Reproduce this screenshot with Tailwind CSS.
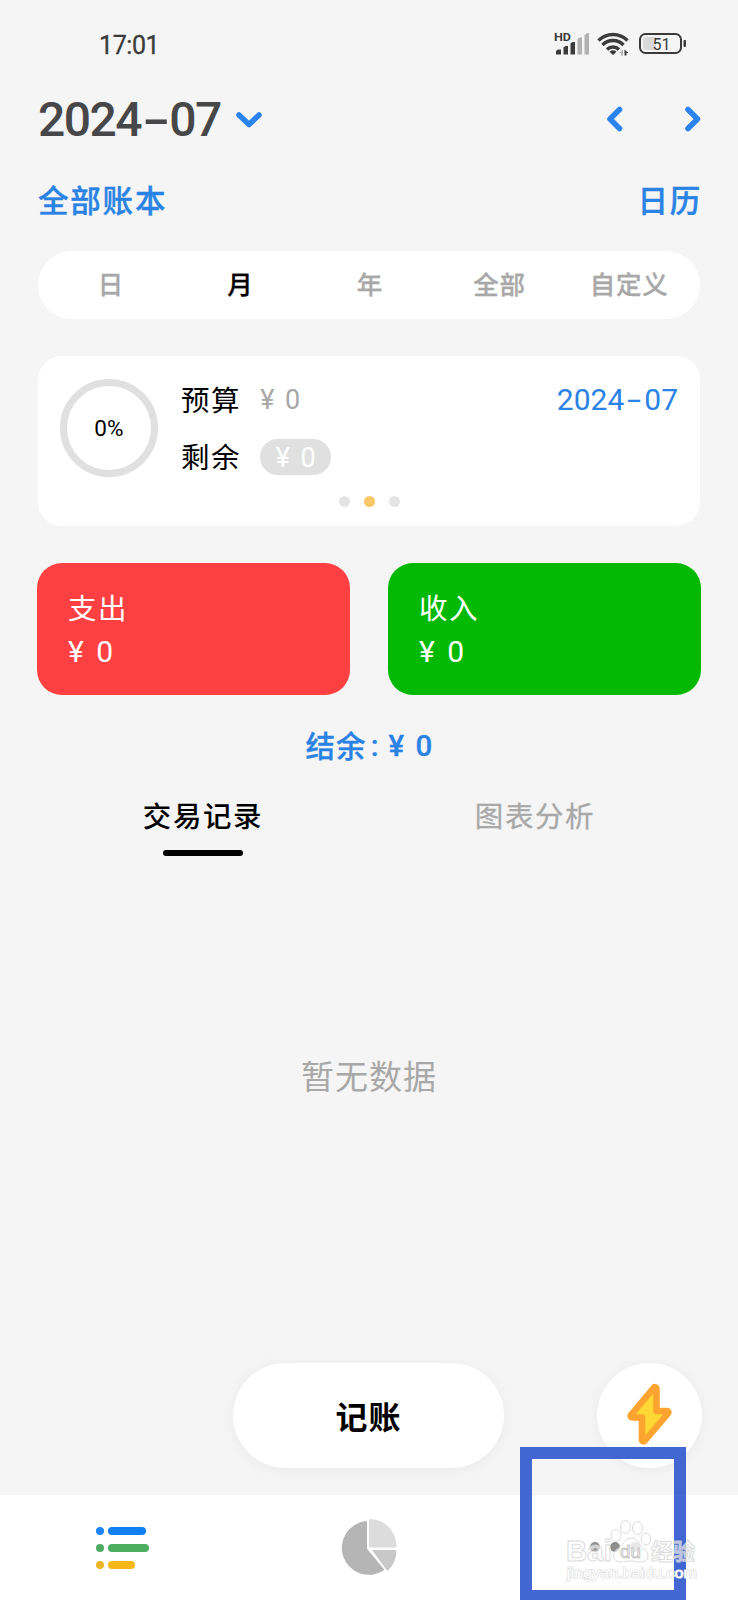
<!DOCTYPE html>
<html lang="zh-CN">
<head>
    <meta charset="UTF-8">
    <meta name="viewport" content="width=device-width, initial-scale=1.0">
    <title>记账</title>

    <script src="https://cdn.jsdelivr.net/npm/@tailwindcss/browser@4"></script>

    <style>
        body { font-family: Roboto, 'Noto Sans CJK SC', sans-serif; }
    </style>
</head>
<body class="bg-[#f5f5f5]">

    <div class="relative flex flex-col w-[738px] h-[1600px] overflow-hidden leading-none text-black">

        <!-- Status bar -->
        <div class="flex items-center justify-between h-[88px] pl-[99px] pr-[52px] text-[#3b3b3b]">
            <span class="pt-[2px] text-[25px] tracking-[-0.4px] [-webkit-text-stroke:0.3px]">17:01</span>
            <svg class="w-[132px] h-[26px]" viewBox="0 0 132 26">
                <text x="0" y="10" font-size="11" font-weight="700" fill="#3b3b3b" textLength="17" lengthAdjust="spacingAndGlyphs">HD</text>
                <g fill="#3b3b3b">
                    <path d="M2 23.500v-3.500l2-1.500h3v5zM9.500 23.500v-7l2-1.500h2.500v8.500zM16.500 23.500v-11l2-1.500h2.500v12.500z"/>
                    <path fill="#b1b1b1" d="M23.500 23.500V8l2-1.500H28v17zM30.500 23.500V4l3-2H35v21.500z"/>
                </g>
                <g fill="none" stroke="#3b3b3b" stroke-width="3.400">
                    <path d="M44.500 9.500a20.500 20.500 0 0 1 29 0M48.500 14a14.500 14.500 0 0 1 21 0M53 18.500a8.500 8.500 0 0 1 12 0"/>
                </g>
                <path fill="#3b3b3b" d="M59 24l-3.500-3.300a5 5 0 0 1 7 0zM70.500 18.500l4 3.500h-2v2.500h-2z"/>
                <path fill="#b1b1b1" d="M69 24.500v-6L65 22h2v2.500z"/>
                <rect x="86" y="3" width="41" height="19" rx="5.500" fill="none" stroke="#3b3b3b" stroke-width="2"/>
                <path fill="#d9d9d9" d="M92 6h10v13H92a3 3 0 0 1-3-3V9a3 3 0 0 1 3-3z"/>
                <rect x="129.500" y="9" width="2.500" height="7" rx="1" fill="#3b3b3b"/>
                <text x="98.500" y="18.500" font-size="16" fill="#3b3b3b">51</text>
            </svg>
        </div>

        <!-- Month picker -->
        <div class="flex items-center h-[62px] pl-[38px] pr-[37px]">
            <h1 class="pt-[2px] text-[48px] font-medium text-[#47474a] tracking-[-1.5px]">2024<span class="inline-block w-[28px] text-center scale-x-170">-</span>07</h1>
            <svg class="w-[26px] h-4 ml-[15px] mt-px text-[#2a83ee]" viewBox="0 0 26 16" fill="none" stroke="currentColor" stroke-width="5.500" stroke-linecap="round" stroke-linejoin="round">
                <path d="M3 3l10 9.500L23 3"/>
            </svg>
            <div class="flex gap-[62px] ml-auto text-[#2a83ee]">
                <svg class="w-4 h-[26px]" viewBox="0 0 16 26" fill="none" stroke="currentColor" stroke-width="5.500" stroke-linecap="round" stroke-linejoin="round">
                    <path d="M12.500 3.500L3 13l9.500 9.500"/>
                </svg>
                <svg class="w-4 h-[26px]" viewBox="0 0 16 26" fill="none" stroke="currentColor" stroke-width="5.500" stroke-linecap="round" stroke-linejoin="round">
                    <path d="M3 3.500l9.500 9.500L3 22.500"/>
                </svg>
            </div>
        </div>

        <!-- Ledger / calendar links -->
        <div class="flex items-center justify-between h-[101px] pt-[3px] pl-[38px] pr-[36px] text-[30.5px] font-medium tracking-[1.8px] text-[#2a83e4] [-webkit-text-stroke:0.4px]">
            <a>全部账本</a>
            <a>日历</a>
        </div>

        <!-- Period tabs -->
        <div class="grid grid-cols-5 items-center h-[68px] mx-[38px] pt-[2px] pl-[8px] pr-[6px] rounded-full bg-white text-center text-[25.5px] font-medium tracking-[0.8px] text-[#a8a8a8] [-webkit-text-stroke:0.3px]">
            <span>日</span>
            <span class="text-black">月</span>
            <span>年</span>
            <span>全部</span>
            <span>自定义</span>
        </div>

        <!-- Budget card -->
        <div class="flex flex-col h-[170px] mt-[37px] mx-[38px] pt-[23px] px-[22px] rounded-[24px] bg-white">
            <div class="flex h-[100px]">
                <div class="flex items-center justify-center size-[98px] pt-px rounded-full border-[7px] border-[#e0e0e0] text-[22.5px] tracking-[0.3px]">0%</div>
                <div class="flex flex-col ml-[23px] text-[28.5px]">
                    <div class="flex items-center h-[43px]">
                        <span class="pt-[3px] tracking-[1.6px]">预算</span>
                        <span class="ml-[19px] text-[27px] [word-spacing:4px] text-[#a8a8a8]">¥ 0</span>
                    </div>
                    <div class="flex items-center h-[36px] mt-[17px]">
                        <span class="pt-[4px] tracking-[1.6px]">剩余</span>
                        <span class="flex items-center justify-center w-[71px] h-[36px] pt-[2px] ml-[19px] rounded-full bg-[#e0e0e0] text-[27px] [word-spacing:4px] text-white">¥ 0</span>
                    </div>
                </div>
                <span class="flex items-center h-[41px] ml-auto text-[30px] text-[#2a83e4]">2024<span class="inline-block w-[20px] text-center scale-x-170">-</span>07</span>
            </div>
            <div class="flex justify-center gap-[14px] mt-[17px]">
                <span class="size-[11px] rounded-full bg-[#e4e4e4]"></span>
                <span class="size-[11px] rounded-full bg-[#fbc767]"></span>
                <span class="size-[11px] rounded-full bg-[#e4e4e4]"></span>
            </div>
        </div>

        <!-- Expense / income -->
        <div class="grid grid-cols-2 gap-[38px] mt-[37px] mx-[37px] text-[28.5px] text-white">
            <div class="h-[132px] pl-[31px] pt-[33px] rounded-[25px] bg-[#ff4042]">
                <p class="tracking-[1.6px]">支出</p>
                <p class="mt-[12px] text-[30px] [word-spacing:5px]">¥ 0</p>
            </div>
            <div class="h-[132px] pl-[31px] pt-[33px] rounded-[25px] bg-[#03b903]">
                <p class="tracking-[1.6px]">收入</p>
                <p class="mt-[12px] text-[30px] [word-spacing:5px]">¥ 0</p>
            </div>
        </div>

        <p class="flex items-center justify-center h-[102px] pt-[2px] text-[29.5px] font-medium text-[#2a83e4] [-webkit-text-stroke:0.3px]"><span class="pt-px tracking-[1px]">结余</span><span class="w-[22px] pr-[6px] text-center">:</span><span class="[word-spacing:4px]">¥ 0</span></p>

        <!-- Content tabs -->
        <div class="grid grid-cols-2 mx-[37px] text-center text-[28.5px] tracking-[1.6px]">
            <div class="flex flex-col items-center pt-[7px]">
                <span class="font-medium">交易记录</span>
                <span class="w-[80px] h-[6px] mt-[17px] rounded-full bg-black"></span>
            </div>
            <div class="pt-[7px] text-[#a8a8a8] [-webkit-text-stroke:0.3px]">图表分析</div>
        </div>

        <p class="mt-[205px] text-center text-[33px] tracking-[1px] text-[#a8a8a8]">暂无数据</p>

        <!-- Floating actions -->
        <div class="flex items-center justify-between mt-auto mb-[27px] pl-[233px] pr-[36px]">
            <button class="w-[271px] h-[105px] pt-[4px] rounded-full bg-white text-[32px] font-bold tracking-[1px] shadow-[0_2px_14px_rgba(0,0,0,0.05)]">记账</button>
            <button class="flex items-center justify-center size-[105px] pb-1 rounded-full bg-white shadow-[0_2px_14px_rgba(0,0,0,0.05)]">
                <svg class="w-[46px] h-[62px]" viewBox="0 0 46 62">
                    <path d="M27 4.500L4 32a1.500 1.500 0 0 0 1 2.500h10V57a1.500 1.500 0 0 0 2.500 1L41 30.500a1.500 1.500 0 0 0-1-2.500H29.500V5.500a1.500 1.500 0 0 0-2.500-1z" fill="#fdd835" stroke="#fda32f" stroke-width="6.500" stroke-linejoin="round"/>
                </svg>
            </button>
        </div>

        <!-- Bottom navigation -->
        <nav class="grid grid-cols-3 h-[105px] bg-white">
            <div class="flex flex-col gap-[9px] pt-[32px] pl-[96px]">
                <div class="flex gap-1"><i class="size-2 rounded-full bg-[#1c83f0]"></i><i class="w-[38px] h-2 rounded-full bg-[#1180f5]"></i></div>
                <div class="flex gap-1"><i class="size-2 rounded-full bg-[#4fab64]"></i><i class="w-[41px] h-2 rounded-full bg-[#4cae61]"></i></div>
                <div class="flex gap-1"><i class="size-2 rounded-full bg-[#f0b429]"></i><i class="w-[27px] h-2 rounded-full bg-[#f7b816]"></i></div>
            </div>
            <div class="flex justify-center pt-[24px] pr-px">
                <svg class="w-14 h-[57px]" viewBox="0 0 56 57">
                    <path fill="#b5b5b5" d="M26 3q0-1-1-1A27 27 0 1 0 42.500 51.500q1-.8.3-1.600L27 31q-1-1-1-2.500z"/>
                    <path fill="#dcdcdc" d="M28 1.500Q28 0 29.500 0A27 27 0 0 1 55.500 27q0 1.500-1.500 1.500H28z"/>
                    <path fill="#c8c8c8" d="M31 31H54q1.500 0 1.300 1.500A27 27 0 0 1 47.500 51q-1 1-2 0z"/>
                </svg>
            </div>
            <div class="flex gap-[10px] pt-[47px] pl-[98px]">
                <i class="size-[10px] rounded-full bg-[#8e8e8e]"></i>
                <i class="size-[10px] rounded-full bg-[#8e8e8e]"></i>
                <i class="size-[10px] rounded-full bg-[#c4c4c4]"></i>
            </div>
        </nav>

        <!-- Highlight frame -->
        <div class="absolute left-[520px] top-[1447px] w-[166px] h-[155px] border-12 border-[#4267d2]"></div>

        <!-- Watermark -->
        <svg class="absolute left-[560px] top-[1515px] w-[145px] h-[72px]" viewBox="0 0 145 72" font-family="'Liberation Sans', 'Noto Sans CJK SC', sans-serif">
            <g fill="#fff" fill-opacity="0.600" stroke="#d2d2d2" stroke-opacity="0.800">
                <text x="6" y="46" font-size="30" font-weight="700" textLength="46" lengthAdjust="spacingAndGlyphs">Bai</text>
                <ellipse cx="56" cy="20.500" rx="4.800" ry="6"/>
                <ellipse cx="65.500" cy="12" rx="5" ry="6.500"/>
                <ellipse cx="77.500" cy="13" rx="5" ry="6.500"/>
                <ellipse cx="86" cy="24" rx="4.800" ry="6"/>
                <path d="M71 23c-7 0-8 8-15 12-5 4-3 12 5 12 4 0 6-1 10-1s6 1 10 1c8 0 9-8 4-12-6-4-7-12-14-12z"/>
                <text x="91" y="45" font-size="23" font-weight="700" textLength="44" lengthAdjust="spacingAndGlyphs">经验</text>
            </g>
            <text x="60" y="43" font-size="19" fill="#fff" stroke="#c6c6c6" stroke-width="1" textLength="21" lengthAdjust="spacingAndGlyphs">du</text>
            <text x="7" y="63" font-size="15" fill="#fff" stroke="#dcdcdc" stroke-width="1.200" paint-order="stroke" textLength="130" lengthAdjust="spacingAndGlyphs">jingyan.baidu.com</text>
        </svg>
    </div>
</body>
</html>
